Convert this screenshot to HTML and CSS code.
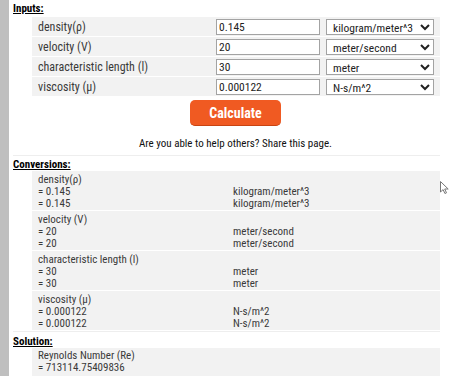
FILE: index.html
```html
<!doctype html>
<html>
  <head>
    <title>Reynolds Number Calculator</title>
    <meta name="viewport" content="width=device-width, initial-scale=1">
    <link rel="stylesheet" href="styles.css">
  </head>
  <body>
    <main class="page">
      <h3 class="sec">Inputs:</h3>
      <section class="inputs">
        <div class="in-row">
          <span class="lbl">density(ρ)</span>
          <input class="num" value="0.145">
          <select class="unit"><option>kilogram/meter^3</option></select>
        </div>
        <div class="in-row">
          <span class="lbl">velocity (V)</span>
          <input class="num" value="20">
          <select class="unit"><option>meter/second</option></select>
        </div>
        <div class="in-row">
          <span class="lbl">characteristic length (l)</span>
          <input class="num" value="30">
          <select class="unit"><option>meter</option></select>
        </div>
        <div class="in-row">
          <span class="lbl">viscosity (μ)</span>
          <input class="num" value="0.000122">
          <select class="unit"><option>N-s/m^2</option></select>
        </div>
      </section>

      <div class="actions">
        <button class="calc">Calculate</button>
        <p class="share">Are you able to help others? Share this page.</p>
      </div>

      <h3 class="sec">Conversions:</h3>
      <section class="conv">
        <div class="block">
          <div class="c-l">density(ρ)</div><div class="c-r"></div>
          <div class="c-l">= 0.145</div><div class="c-r">kilogram/meter^3</div>
          <div class="c-l">= 0.145</div><div class="c-r">kilogram/meter^3</div>
        </div>
        <div class="block">
          <div class="c-l">velocity (V)</div><div class="c-r"></div>
          <div class="c-l">= 20</div><div class="c-r">meter/second</div>
          <div class="c-l">= 20</div><div class="c-r">meter/second</div>
        </div>
        <div class="block">
          <div class="c-l">characteristic length (l)</div><div class="c-r"></div>
          <div class="c-l">= 30</div><div class="c-r">meter</div>
          <div class="c-l">= 30</div><div class="c-r">meter</div>
        </div>
        <div class="block">
          <div class="c-l">viscosity (μ)</div><div class="c-r"></div>
          <div class="c-l">= 0.000122</div><div class="c-r">N-s/m^2</div>
          <div class="c-l">= 0.000122</div><div class="c-r">N-s/m^2</div>
        </div>
      </section>

      <h3 class="sec">Solution:</h3>
      <section class="conv">
        <div class="block solution">
          <div class="c-l">Reynolds Number (Re)</div><div class="c-r"></div>
          <div class="c-l">= 713114.75409836</div><div class="c-r"></div>
        </div>
      </section>
    </main>
    <svg class="pointer" viewBox="0 0 9 13" width="9" height="13">
      <path d="M0.5 0.5v10.5l2.6-2.4 1.8 3.9 1.6-0.7-1.8-3.8h3.5z" fill="#fff" stroke="#777" stroke-width="1" stroke-linejoin="round" />
    </svg>
  </body>
</html>
```

FILE: styles.css
```css
* {
  box-sizing: border-box;
}

html, body {
  margin: 0;
  height: 100%;
  overflow: hidden;
  background: #fff;
}

body {
  font-family: "Liberation Sans Narrow", "Roboto Condensed", Roboto, sans-serif;
  color: #333;
}

.page {
  min-height: 100%;
  border-left: 9px solid #bfbfbf;
  padding: 2px 10px 0 4px;
}

.sec {
  margin: 0;
  font-size: 11px;
  font-weight: bold;
  line-height: 13px;
  color: #000;
  text-decoration: underline;
}

.inputs {
  margin: 2px 0 0 19px;
  display: flex;
  flex-direction: column;
  gap: 1px;
}

.in-row {
  height: 19px;
  padding-left: 6px;
  background: #f2f2f2;

  display: flex;
  align-items: center;

  font-size: 12px;
  color: #3a3a3a;
}

.lbl {
  width: 178px;
  flex: none;
}

.num,
.unit {
  height: 16px;
  margin: 0;
  border: 1px solid #a3a3a3;
  border-radius: 0;
  background: #fff;
  font-family: inherit;
  font-size: 11.5px;
  color: #222;
}

.num {
  width: 104px;
  padding: 0 2px;
}

.unit {
  width: 108px;
  margin-left: 6px;
  padding: 0 0 0 2px;
}

.actions {
  display: flex;
  flex-direction: column;
  align-items: center;
  padding: 4px 0 5px;
  border-bottom: 1px solid #eee;
}

.calc {
  width: 91px;
  height: 26px;
  margin-left: 18px;
  border: none;
  border-bottom: 1px solid #c84412;
  border-radius: 5px;
  background: #f05a22;
  color: #fff;
  font-family: inherit;
  font-size: 14px;
  font-weight: bold;
}

.share {
  margin: 11px 0 0 18px;
  font-size: 11px;
  line-height: 13px;
  color: #111;
}

.actions + .sec {
  margin-top: 2px;
}

.conv {
  margin: 0 0 0 19px;
  display: flex;
  flex-direction: column;
  gap: 1px;
}

.conv + .sec {
  margin-top: 1px;
  padding-top: 3px;
  border-top: 1px solid #eee;
}

.block {
  height: 39px;
  padding: 3px 0 0 6px;
  background: #f2f2f2;

  display: grid;
  grid-template-columns: 195px 1fr;
  align-content: start;

  font-size: 11px;
  line-height: 12px;
  color: #3a3a3a;
}

.solution {
  height: 40px;
  padding-top: 2px;
}

/* mouse pointer captured in the screenshot */
.pointer {
  position: absolute;
  left: 440px;
  top: 181px;
}
```
